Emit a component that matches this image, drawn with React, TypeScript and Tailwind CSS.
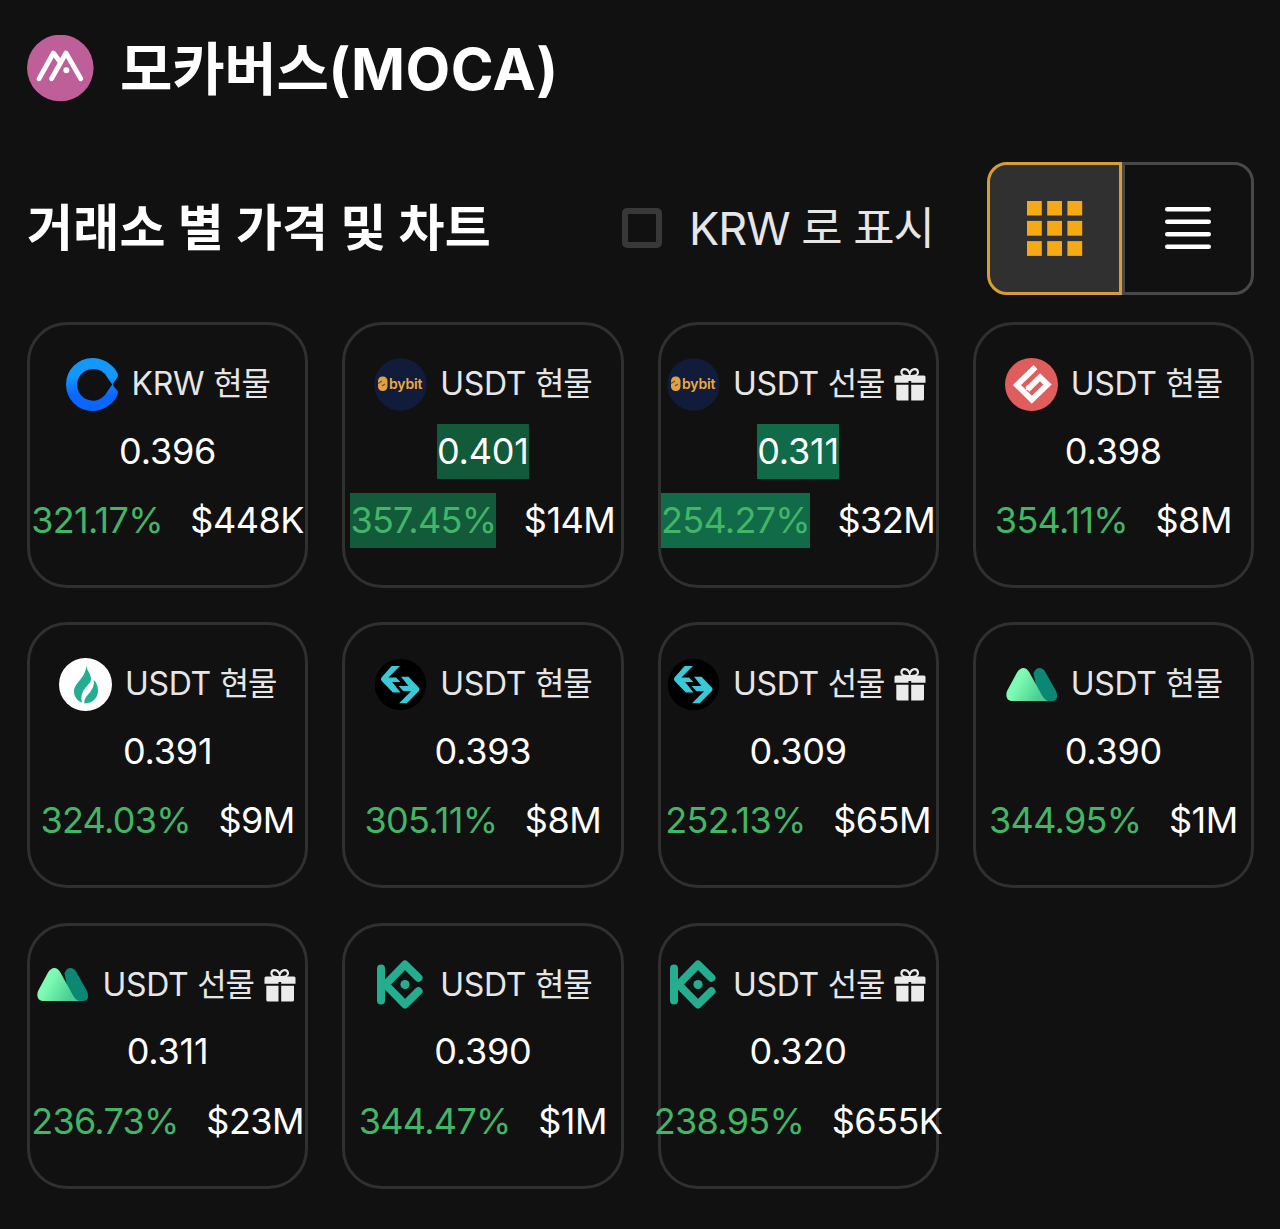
import type { ReactNode } from "react";

type Exchange = "bithumb" | "bybit" | "gate" | "huobi" | "bitget" | "mexc" | "kucoin";

type Ticker = {
  exchange: Exchange;
  currency: string;
  market: string;
  price: string;
  premium: string;
  volume: string;
  flash?: string;
};

const tickers: Ticker[] = [
  { exchange: "bithumb", currency: "KRW", market: "현물", price: "0.396", premium: "321.17%", volume: "$448K" },
  { exchange: "bybit", currency: "USDT", market: "현물", price: "0.401", premium: "357.45%", volume: "$14M", flash: "bg-[#125a3a]" },
  { exchange: "bybit", currency: "USDT", market: "선물", price: "0.311", premium: "254.27%", volume: "$32M", flash: "bg-[#116a48]" },
  { exchange: "gate", currency: "USDT", market: "현물", price: "0.398", premium: "354.11%", volume: "$8M" },
  { exchange: "huobi", currency: "USDT", market: "현물", price: "0.391", premium: "324.03%", volume: "$9M" },
  { exchange: "bitget", currency: "USDT", market: "현물", price: "0.393", premium: "305.11%", volume: "$8M" },
  { exchange: "bitget", currency: "USDT", market: "선물", price: "0.309", premium: "252.13%", volume: "$65M" },
  { exchange: "mexc", currency: "USDT", market: "현물", price: "0.390", premium: "344.95%", volume: "$1M" },
  { exchange: "mexc", currency: "USDT", market: "선물", price: "0.311", premium: "236.73%", volume: "$23M" },
  { exchange: "kucoin", currency: "USDT", market: "현물", price: "0.390", premium: "344.47%", volume: "$1M" },
  { exchange: "kucoin", currency: "USDT", market: "선물", price: "0.320", premium: "238.95%", volume: "$655K" },
];

const logos: Record<Exchange, ReactNode> = {
  bithumb: (
    <>
      <defs>
        <linearGradient id="ring" x1="0" y1="0" x2="0" y2="1">
          <stop offset="0.35" stopColor="#1497fb" />
          <stop offset="0.7" stopColor="#0b66fd" />
        </linearGradient>
      </defs>
      <path
        d="M26.5 0C36.5 0 46 5.5 51 14.2Q52.8 17.5 51 20L47.2 25.5Q46.7 26.5 47.2 27.5L51.5 33Q52.5 35 51.2 37.8C46.5 47 37 53 26.5 53A26.5 26.5 0 0 1 26.5 0ZM27 11A15.8 15.8 0 1 0 41 34L46.2 26.5L41 19A15.8 15.8 0 0 0 27 11Z"
        fill="url(#ring)"
      />
    </>
  ),
  bybit: (
    <>
      <circle cx="26.5" cy="26.5" r="26.3" fill="#111c3b" />
      <rect x="4" y="18.5" width="9.5" height="14.5" rx="4.5" fill="#e3a144" />
      <path d="M4 25.5l4-2.5M8 28l3-2" stroke="#674d31" strokeWidth="1.3" />
      <text
        x="15"
        y="31"
        fill="#efa93c"
        fontFamily="Inter, sans-serif"
        fontSize="14"
        fontWeight="600"
        textLength="33.5"
        lengthAdjust="spacing"
      >
        bybit
      </text>
    </>
  ),
  gate: (
    <>
      <circle cx="26.5" cy="26.5" r="26.5" fill="#df5d5d" />
      <path
        d="M30.5 9.2L12 27L26.8 41.8L42.5 26.6L35 19.2L22.4 31.6"
        fill="none"
        stroke="#fff"
        strokeWidth="5.8"
      />
      <path d="M21.5 27.5L28 27.5L25.5 31.8L21 32Z" fill="#fff" />
    </>
  ),
  huobi: (
    <>
      <circle cx="26.5" cy="26.5" r="26.5" fill="#fff" />
      <path
        d="M27.3 7.8C28 13 32 15.5 32 20.8C32 25 28 27.5 24.5 32.5C22 36.3 22 40.5 23 44.5C18.5 43.3 15 38.5 15 33.5C15 25 26.5 20.5 27.3 7.8Z"
        fill="#23ae92"
      />
      <path
        d="M34.8 21.8C37.8 25 39.2 29 39 33.5C38.5 41 32.5 45.7 25.2 45.2C25.2 40 28 37.8 31 34.2C34 30.5 35.5 26.8 34.8 21.8Z"
        fill="#23ae92"
      />
    </>
  ),
  bitget: (
    <>
      <circle cx="26.5" cy="26.5" r="25.8" fill="#000" />
      <g fill="#3bc9d8">
        <path d="M17.6 8H26L18.5 15.5L14.5 19.5H22L26.5 24H18.2L26.5 34.5H18.8L7.5 22.8Q6.3 21.2 7.5 19.5Z" />
        <path d="M27 18.7H34.5L45 29.8Q46.2 31.4 45 33L32.8 45.3H25L37 33.3H29.5L24.5 28H34.5Z" />
      </g>
    </>
  ),
  mexc: (
    <>
      <defs>
        <linearGradient id="hill" x1="0" y1="0" x2="1" y2="0.45">
          <stop offset="0.4" stopColor="#7efbb3" />
          <stop offset="1" stopColor="#48cc90" />
        </linearGradient>
      </defs>
      <path
        d="M28.5 15.2C31 8.5 37 8.3 40.3 14L51 33Q54.5 42.5 47 43H34Z"
        fill="#0c8774"
      />
      <path
        d="M12 14.5C15.5 8.5 21 8.3 24.3 14.2L36.5 36.5Q39.5 42 43 43H6.5C1.5 42.5.2 37 2.3 32.5Z"
        fill="url(#hill)"
      />
    </>
  ),
  kucoin: (
    <>
      <g fill="none" stroke="#24ae8f" strokeWidth="8" strokeLinejoin="round" strokeLinecap="round">
        <path d="M7 10.5V42.5" />
        <path d="M9 26.5H11.5L31 46.5L44.5 33.2" />
        <path d="M11.5 26.5L31 6.5L44.5 19.8" />
      </g>
      <circle cx="31" cy="26.5" r="4.6" fill="#24ae8f" />
    </>
  ),
};

function ExchangeLogo({ exchange }: { exchange: Exchange }) {
  return (
    <svg viewBox="0 0 53 53" className="size-[53px] shrink-0" aria-label={exchange}>
      {logos[exchange]}
    </svg>
  );
}

function GiftIcon() {
  return (
    <svg viewBox="0 0 32 34" className="mr-[3px] ml-[10px] h-[34px] w-8 shrink-0" fill="#ebebeb" aria-hidden="true">
      <path
        d="M15.5 9C9 9.5 7.2 7.4 7.4 5.2C7.8 1.2 13.5.8 15.7 6.5C18 .8 23.5 1.2 24 5.2C24.2 7.4 22 9.5 15.5 9Z"
        fill="none"
        stroke="#ebebeb"
        strokeWidth="2.2"
      />
      <path d="M2 8.5H30Q31.5 8.5 31.5 10V15.7H17.2V14H14.5V15.7H.5V10Q.5 8.5 2 8.5Z" />
      <path d="M2.3 17.7H14.5V33.5H4Q2.3 33.5 2.3 32ZM17.2 17.7H30V32Q30 33.5 28.3 33.5H17.2Z" />
    </svg>
  );
}

function TickerCard({ ticker }: { ticker: Ticker }) {
  const flash = ticker.flash ?? "";

  return (
    <div className="flex h-[266px] flex-col items-center gap-[13.5px] rounded-[40px] border-3 border-[#303030] pt-8 whitespace-nowrap">
      <div className="flex h-[54px] items-center text-[32px] text-[#e6e6e6]">
        <ExchangeLogo exchange={ticker.exchange} />
        <span className="ml-[13px] tracking-[-0.3px]">{ticker.currency}</span>
        <span className="ml-[9px] tracking-[-1.2px]">{ticker.market}</span>
        {ticker.market === "선물" && <GiftIcon />}
      </div>
      <span className={`-mt-px mb-px h-[55px] text-4xl leading-[55px] tracking-[-0.2px] text-white ${flash}`}>
        {ticker.price}
      </span>
      <div className="flex h-[55px] gap-[27.5px] text-4xl leading-[55px]">
        <span className={`tracking-[-0.7px] text-[#42b566] ${flash}`}>{ticker.premium}</span>
        <span className="tracking-[-0.5px] text-white">{ticker.volume}</span>
      </div>
    </div>
  );
}

export default function App() {
  return (
    <main className="min-h-[1229px] overflow-hidden bg-[#111] pr-[26px] pl-[27px] font-['Inter','Noto_Sans_CJK_KR',sans-serif]">
      <header className="flex h-[136px] items-center gap-[26px]">
        <svg viewBox="0 0 67 67" className="size-[67px] shrink-0" aria-hidden="true">
          <circle cx="33.3" cy="33" r="33.3" fill="#bf5f99" />
          <g fill="none" stroke="#fff" strokeWidth="4.8" strokeLinecap="round" strokeLinejoin="round">
            <path d="M12 43.8L26.4 18L32.8 26.5" />
            <path d="M24.5 43.8L39 18L53.8 43.8" />
          </g>
          <circle cx="39.4" cy="35.3" r="3" fill="#fff" />
        </svg>
        <h1 className="pt-px text-[58px] leading-none font-bold whitespace-nowrap text-white">
          <span className="text-[57px] tracking-[-0.3px]">모카버스</span>
          <span className="tracking-[0.5px]">(MOCA)</span>
        </h1>
      </header>

      <section>
        <div className="mt-[26px] flex h-[133px] items-center">
          <h2 className="pb-0.5 text-[50px] leading-none font-bold tracking-[0.2px] whitespace-nowrap text-white">
            거래소 별 가격 및 차트
          </h2>
          <label className="ml-auto flex items-center gap-[27px] pb-px text-[45px] leading-none tracking-[-1px] whitespace-nowrap text-[#e6e6e6]">
            <span className="size-10 rounded-[5px] border-[6px] border-[#383838]" />
            <span>KRW 로 표시</span>
          </label>
          <div className="ml-[53px] flex h-[133px] w-[267px] shrink-0">
            <button className="flex w-[135px] items-center justify-center rounded-l-[20px] border-3 border-[#d89d37] bg-[#303030]">
              <svg viewBox="0 0 56 56" className="size-14" fill="#f5a914">
                {[0, 20.2, 40.4].map((y) =>
                  [0, 20.2, 40.4].map((x) => <rect key={`${x}-${y}`} x={x} y={y - 0.3} width="14.8" height="14.8" />),
                )}
              </svg>
            </button>
            <button className="flex w-[132px] items-center justify-center rounded-r-[20px] border-3 border-[#484848]">
              <svg viewBox="0 0 46 44" className="h-11 w-[46px]" stroke="#fff" strokeWidth="4.4" strokeLinecap="round">
                <path d="M2.2 2.2H43.8M2.2 14.7H43.8M2.2 27.2H43.8M2.2 39.7H43.8" />
              </svg>
            </button>
          </div>
        </div>

        <div className="mt-[27px] grid grid-cols-4 gap-x-[34px] gap-y-[34.4px]">
          {tickers.map((ticker, i) => (
            <TickerCard key={i} ticker={ticker} />
          ))}
        </div>
      </section>
    </main>
  );
}
